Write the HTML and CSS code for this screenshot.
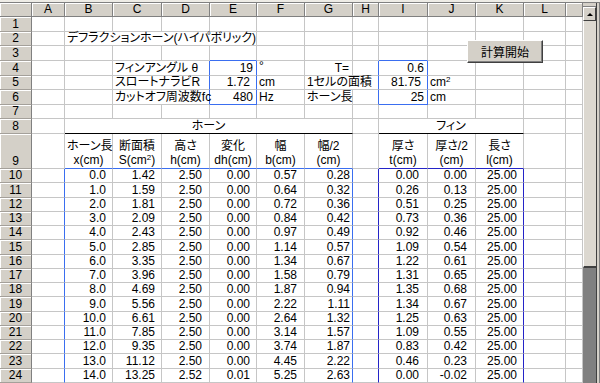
FILE: index.html
```html
<!DOCTYPE html>
<html lang="ja">
<head>
    <meta charset="UTF-8">
    <meta name="viewport" content="width=device-width, initial-scale=1.0">
    <title>デフラクションホーン</title>
    <link rel="stylesheet" href="styles.css">
</head>
<body>
    <div class="topbar"></div>
    <div class="main">
        <div class="sheet">
            <table class="grid">
                <colgroup>
                    <col class="c-rh"><col class="c-a">
                    <col class="c-b"><col class="c-c"><col class="c-d"><col class="c-e"><col class="c-f"><col class="c-g">
                    <col class="c-h"><col class="c-i"><col class="c-j"><col class="c-k"><col class="c-l"><col class="c-m">
                </colgroup>
                <thead>
                    <tr class="colhead">
                        <th></th><th>A</th><th>B</th><th>C</th><th>D</th><th>E</th><th>F</th><th>G</th>
                        <th>H</th><th>I</th><th>J</th><th>K</th><th>L</th><th></th>
                    </tr>
                </thead>
                <tbody>
                    <tr class="r"><th>1</th><td></td><td></td><td></td><td></td><td></td><td></td><td></td><td></td><td></td><td></td><td></td><td></td><td></td></tr>
                    <tr class="r"><th>2</th><td></td><td colspan="4">デフラクションホーン(ハイパボリック)</td><td></td><td></td><td></td><td></td><td></td><td></td><td></td><td></td></tr>
                    <tr class="r"><th>3</th><td></td><td></td><td></td><td></td><td class="bb"></td><td></td><td></td><td></td><td class="bb"></td><td></td><td></td><td></td><td></td></tr>
                    <tr class="r">
                        <th>4</th><td></td><td></td>
                        <td colspan="2" class="br">フィンアングル θ</td>
                        <td class="n br">19</td>
                        <td class="deg">°</td>
                        <td class="n">T=</td>
                        <td class="br"></td>
                        <td class="n br">0.6</td>
                        <td></td><td></td><td></td><td></td>
                    </tr>
                    <tr class="r">
                        <th>5</th><td></td><td></td>
                        <td colspan="2" class="br">スロートナラビR</td>
                        <td class="n br pad">1.72</td>
                        <td>cm</td>
                        <td colspan="2" class="br">1セルの面積</td>
                        <td class="n br pad">81.75</td>
                        <td>cm<sup>2</sup></td>
                        <td></td><td></td><td></td>
                    </tr>
                    <tr class="r">
                        <th>6</th><td></td><td></td>
                        <td colspan="2" class="br">カットオフ周波数fc</td>
                        <td class="n br bb">480</td>
                        <td>Hz</td>
                        <td>ホーン長</td>
                        <td class="br"></td>
                        <td class="n br bb">25</td>
                        <td>cm</td>
                        <td></td><td></td><td></td>
                    </tr>
                    <tr class="r"><th>7</th><td></td><td></td><td></td><td></td><td></td><td></td><td></td><td></td><td></td><td></td><td></td><td></td><td></td></tr>
                    <tr class="r">
                        <th>8</th><td></td>
                        <td colspan="6" class="grp">ホーン</td>
                        <td></td>
                        <td colspan="3" class="grp">フィン</td>
                        <td></td><td></td>
                    </tr>
                    <tr class="head2">
                        <th>9</th><td></td>
                        <td class="bb">ホーン長<br>x(cm)</td>
                        <td class="bb">断面積<br>S(cm<sup>2</sup>)</td>
                        <td class="bb">高さ<br>h(cm)</td>
                        <td class="bb">変化<br>dh(cm)</td>
                        <td class="bb">幅<br>b(cm)</td>
                        <td class="bb">幅/2<br>(cm)</td>
                        <td></td>
                        <td class="bbd">厚さ<br>t(cm)</td>
                        <td class="bbd">厚さ/2<br>(cm)</td>
                        <td class="bbd">長さ<br>l(cm)</td>
                        <td></td><td></td>
                    </tr>
                    <tr class="data"><th>10</th><td></td><td>0.0</td><td>1.42</td><td>2.50</td><td>0.00</td><td>0.57</td><td>0.28</td><td></td><td>0.00</td><td>0.00</td><td>25.00</td><td></td><td></td></tr>
                    <tr class="data"><th>11</th><td></td><td>1.0</td><td>1.59</td><td>2.50</td><td>0.00</td><td>0.64</td><td>0.32</td><td></td><td>0.26</td><td>0.13</td><td>25.00</td><td></td><td></td></tr>
                    <tr class="data"><th>12</th><td></td><td>2.0</td><td>1.81</td><td>2.50</td><td>0.00</td><td>0.72</td><td>0.36</td><td></td><td>0.51</td><td>0.25</td><td>25.00</td><td></td><td></td></tr>
                    <tr class="data"><th>13</th><td></td><td>3.0</td><td>2.09</td><td>2.50</td><td>0.00</td><td>0.84</td><td>0.42</td><td></td><td>0.73</td><td>0.36</td><td>25.00</td><td></td><td></td></tr>
                    <tr class="data"><th>14</th><td></td><td>4.0</td><td>2.43</td><td>2.50</td><td>0.00</td><td>0.97</td><td>0.49</td><td></td><td>0.92</td><td>0.46</td><td>25.00</td><td></td><td></td></tr>
                    <tr class="data"><th>15</th><td></td><td>5.0</td><td>2.85</td><td>2.50</td><td>0.00</td><td>1.14</td><td>0.57</td><td></td><td>1.09</td><td>0.54</td><td>25.00</td><td></td><td></td></tr>
                    <tr class="data"><th>16</th><td></td><td>6.0</td><td>3.35</td><td>2.50</td><td>0.00</td><td>1.34</td><td>0.67</td><td></td><td>1.22</td><td>0.61</td><td>25.00</td><td></td><td></td></tr>
                    <tr class="data"><th>17</th><td></td><td>7.0</td><td>3.96</td><td>2.50</td><td>0.00</td><td>1.58</td><td>0.79</td><td></td><td>1.31</td><td>0.65</td><td>25.00</td><td></td><td></td></tr>
                    <tr class="data"><th>18</th><td></td><td>8.0</td><td>4.69</td><td>2.50</td><td>0.00</td><td>1.87</td><td>0.94</td><td></td><td>1.35</td><td>0.68</td><td>25.00</td><td></td><td></td></tr>
                    <tr class="data"><th>19</th><td></td><td>9.0</td><td>5.56</td><td>2.50</td><td>0.00</td><td>2.22</td><td>1.11</td><td></td><td>1.34</td><td>0.67</td><td>25.00</td><td></td><td></td></tr>
                    <tr class="data"><th>20</th><td></td><td>10.0</td><td>6.61</td><td>2.50</td><td>0.00</td><td>2.64</td><td>1.32</td><td></td><td>1.25</td><td>0.63</td><td>25.00</td><td></td><td></td></tr>
                    <tr class="data"><th>21</th><td></td><td>11.0</td><td>7.85</td><td>2.50</td><td>0.00</td><td>3.14</td><td>1.57</td><td></td><td>1.09</td><td>0.55</td><td>25.00</td><td></td><td></td></tr>
                    <tr class="data"><th>22</th><td></td><td>12.0</td><td>9.35</td><td>2.50</td><td>0.00</td><td>3.74</td><td>1.87</td><td></td><td>0.83</td><td>0.42</td><td>25.00</td><td></td><td></td></tr>
                    <tr class="data"><th>23</th><td></td><td>13.0</td><td>11.12</td><td>2.50</td><td>0.00</td><td>4.45</td><td>2.22</td><td></td><td>0.46</td><td>0.23</td><td>25.00</td><td></td><td></td></tr>
                    <tr class="data"><th>24</th><td></td><td>14.0</td><td>13.25</td><td>2.52</td><td>0.01</td><td>5.25</td><td>2.63</td><td></td><td>0.00</td><td>-0.02</td><td>25.00</td><td></td><td></td></tr>
                </tbody>
            </table>
            <div class="calc-btn">計算開始</div>
        </div>
        <div class="vscroll">
            <div class="sb">
                <div class="sb-gap"></div>
                <div class="sb-btn"></div>
                <div class="sb-thumb"></div>
                <div class="sb-track"></div>
            </div>
            <div class="sb-edge"></div>
        </div>
    </div>
</body>
</html>
```

FILE: styles.css
```css
*{
    margin: 0px;
    padding: 0px;
}
body{
    width: 600px;
    height: 383px;
    overflow: hidden;
    background: #d4d0c8;
    font-family: "Liberation Sans", "Noto Sans CJK JP", sans-serif;
    font-size: 12px;
    font-feature-settings: "palt";
    color: #000;
}
.topbar{
    height: 2px;
    background: #eeece6;
    border-bottom: 1px solid #808080;
}
.main{
    display: flex;
    height: 380px;
}
.sheet{
    position: relative;
    width: 583px;
    height: 380px;
    overflow: hidden;
    background: #fff;
}

/* grid */
.grid{
    width: 583px;
    table-layout: fixed;
    border-collapse: separate;
    border-spacing: 0;
}
.c-rh{ width: 32px; }
.c-a{ width: 33px; }
.c-b{ width: 48px; }
.c-c{ width: 49px; }
.c-d{ width: 48px; }
.c-e{ width: 47px; }
.c-f{ width: 48px; }
.c-g{ width: 48px; }
.c-h{ width: 26px; }
.c-i{ width: 49px; }
.c-j{ width: 48px; }
.c-k{ width: 48px; }
.c-l{ width: 42px; }
.c-m{ width: 17px; }

.grid td{
    border-right: 1px solid #c6c6c6;
    border-bottom: 1px solid #c6c6c6;
    padding: 0 2px;
    white-space: nowrap;
    overflow: visible;
    vertical-align: bottom;
    line-height: 13px;
    text-align: left;
}
.grid th{
    background: #d4d0c8;
    font-weight: normal;
    text-align: center;
    vertical-align: bottom;
    line-height: 13px;
    border-right: 1px solid #808080;
    border-bottom: 1px solid #a4a09a;
    box-shadow: inset 1px 1px 0 #fff;
}
.colhead{
    height: 14px;
}
.colhead th{
    border-bottom: 1px solid #808080;
    vertical-align: middle;
}
.r{
    height: 14.625px;
}
.head2{
    height: 35px;
}
.data{
    height: 14.25px;
}
sup{
    font-size: 8px;
    line-height: 0;
    vertical-align: 4px;
}

/* values */
.grid td.n{
    text-align: right;
    padding-right: 3px;
}
.grid td.pad{
    padding-right: 6px;
}
.grid td.deg{
    vertical-align: top;
    line-height: 10px;
}
.grid td.grp{
    text-align: center;
    border-bottom: 1px solid #000;
}
.head2 td{
    text-align: center;
    line-height: 14px;
    padding-bottom: 1px;
}
.data td{
    text-align: right;
}
.data td:nth-child(3){ padding-right: 6px; }
.data td:nth-child(4){ padding-right: 6px; }
.data td:nth-child(5){ padding-right: 7px; }
.data td:nth-child(6){ padding-right: 6px; }
.data td:nth-child(7){ padding-right: 7px; }
.data td:nth-child(8){ padding-right: 2px; }
.data td:nth-child(10){ padding-right: 8px; }
.data td:nth-child(11){ padding-right: 8px; }
.data td:nth-child(12){ padding-right: 6px; }

/* selection boxes */
.grid td.br{ border-right-color: #3a6ef0; }
.grid td.bb{ border-bottom-color: #3a6ef0; }
.grid td.bbd{ border-bottom-color: #2424c8; }
.data td:nth-child(2),
.data td:nth-child(8){
    border-right-color: #3a6ef0;
}
.data td:nth-child(9),
.data td:nth-child(12){
    border-right-color: #2424c8;
}

/* button over the sheet */
.calc-btn{
    position: absolute;
    left: 467px;
    top: 37px;
    width: 76px;
    height: 23px;
    box-sizing: border-box;
    background: #d4d0c8;
    border: 1px solid;
    border-color: #fff #404040 #404040 #fff;
    box-shadow: inset -1px -1px 0 #808080;
    display: flex;
    align-items: center;
    justify-content: center;
    font-size: 12px;
}

/* scrollbar */
.vscroll{
    display: flex;
    width: 17px;
}
.sb{
    width: 13px;
    display: flex;
    flex-direction: column;
}
.sb-gap{
    height: 3px;
    background: #d4d0c8;
    border-bottom: 1px solid #808080;
}
.sb-btn{
    height: 14px;
    box-sizing: border-box;
    background: #d4d0c8;
    border: 1px solid;
    border-color: #fff #404040 #404040 #fff;
    display: flex;
    align-items: center;
    justify-content: center;
}
.sb-btn::after{
    content: "";
    border-left: 3px solid transparent;
    border-right: 3px solid transparent;
    border-bottom: 3px solid #000;
}
.sb-thumb{
    height: 247px;
    box-sizing: border-box;
    background: #dcd8d0;
    border-left: 1px solid #fff;
    border-bottom: 2px solid #404040;
}
.sb-track{
    flex: 1;
    background: #808080;
}
.sb-edge{
    width: 4px;
    box-sizing: border-box;
    background: #d4d0c8;
    border-left: 1px solid #404040;
    border-right: 1px solid #808080;
}
```
